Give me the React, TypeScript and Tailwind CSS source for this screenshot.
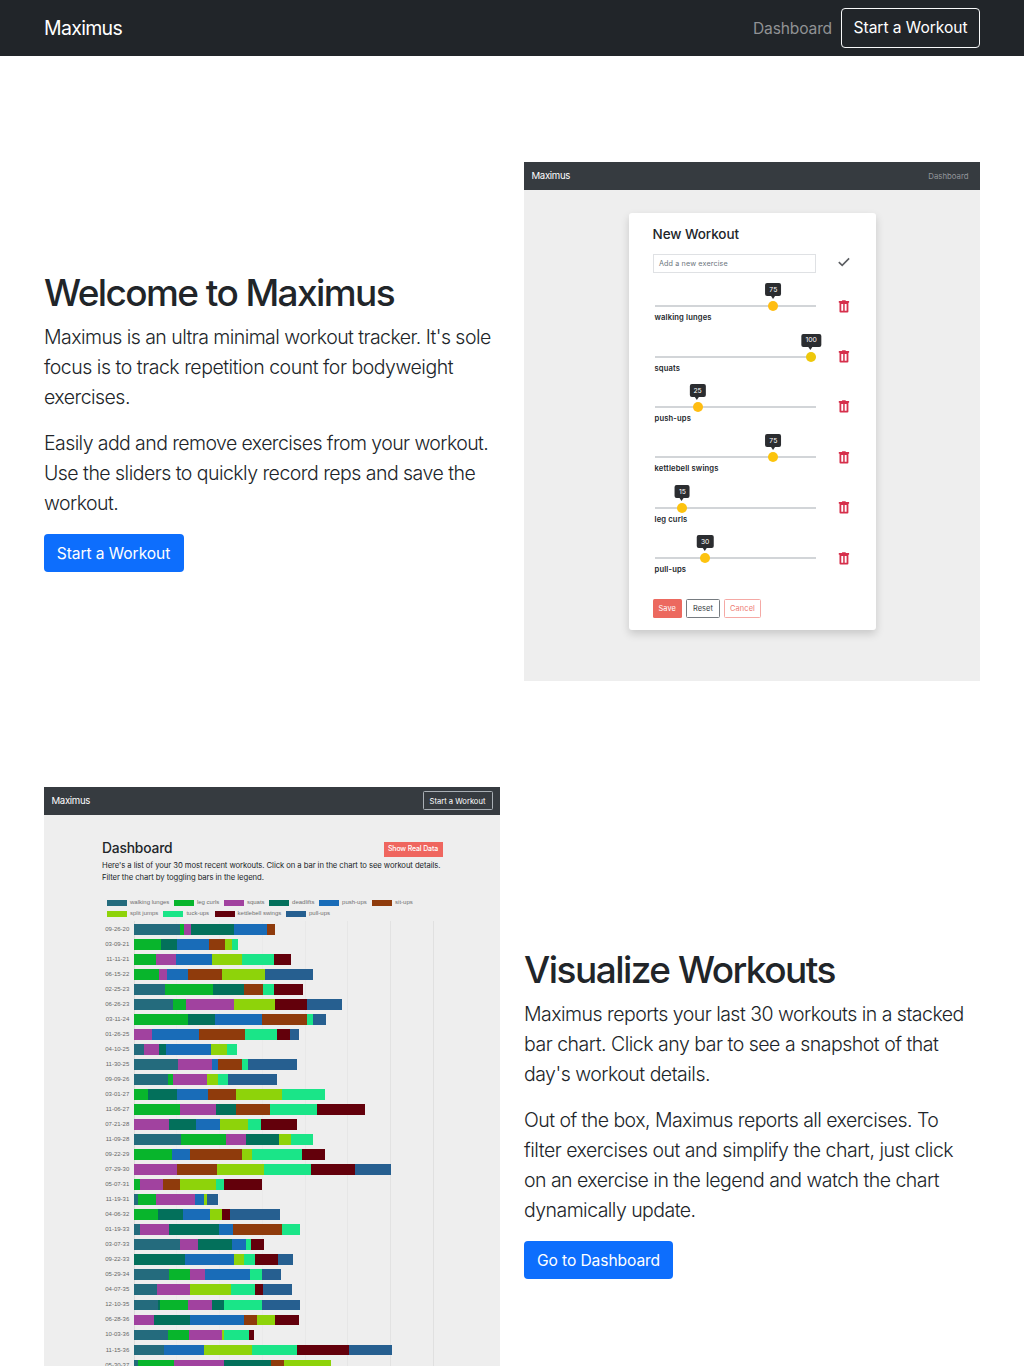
import { ReactNode } from "react";

const colors: Record<string, string> = {
  w: "#246b7d",
  l: "#08b52c",
  s: "#a1429f",
  d: "#03705b",
  p: "#196cb8",
  i: "#8f3b0c",
  j: "#8ed30a",
  t: "#1ae588",
  k: "#63000b",
  u: "#265f90",
};

// Each segment is an exercise key followed by its cumulative end value, at three units per pixel.
const workouts: [string, string][] = [
  ["09-26-20", "w137 l150 s169 d299 p398 i421"],
  ["03-09-21", "l81 d129 p225 i272 j292 t311"],
  ["11-11-21", "l64 s124 p232 j322 t419 k471"],
  ["06-15-22", "l74 s99 p161 i264 j391 u535"],
  ["02-25-23", "w93 l237 d329 i387 t420 k507"],
  ["06-26-23", "w115 l155 s299 j423 k519 u624"],
  ["03-11-24", "l162 d243 p384 i519 t536 u574"],
  ["01-26-25", "s52 p193 i331 t428 k467 u494"],
  ["04-10-25", "w28 s74 d94 p229 j279 t308"],
  ["11-30-25", "w131 s233 p251 i323 t341 u488"],
  ["09-09-26", "w101 l117 s217 j251 t281 u427"],
  ["03-01-27", "l40 d127 p220 i304 j442 t573"],
  ["11-06-27", "l138 s245 d304 i408 t548 k692"],
  ["07-21-28", "s103 d184 p257 j341 t379 k487"],
  ["11-09-28", "w140 l275 s335 d434 j469 t536"],
  ["09-22-29", "l113 p167 i323 j353 t503 k573"],
  ["07-29-30", "s128 i248 j388 t530 k663 u769"],
  ["05-07-31", "l16 s85 i136 j244 t270 k383"],
  ["11-19-31", "w12 l65 s182 p210 j219 u250"],
  ["04-06-32", "l72 d146 p228 j263 k286 u437"],
  ["01-19-33", "w16 s103 d254 p295 i442 t496"],
  ["03-07-33", "w137 s192 d294 p335 t349 k390"],
  ["09-22-33", "d151 p299 j329 t361 k431 u476"],
  ["05-29-34", "w104 l168 s212 p347 t383 u441"],
  ["04-07-35", "w68 s167 j289 t363 k387 u472"],
  ["12-10-35", "w70 d76 l160 s234 d269 t383 u497"],
  ["06-28-36", "s59 d168 p328 i368 j421 k493"],
  ["10-03-36", "w100 l165 s263 j268 t345 k359"],
  ["11-15-36", "w89 p210 j353 t488 k644 u772"],
  ["05-30-37", "w10 l119 s270 d409 i450 j590"],
];

const legend: [string, string, string][][] = [
  [
    ["w", "walking lunges", "w-[66.9px]"],
    ["l", "leg curls", "w-[50px]"],
    ["s", "squats", "w-[45.2px]"],
    ["d", "deadlifts", "w-[50px]"],
    ["p", "push-ups", "w-[53px]"],
    ["i", "sit-ups", "w-[50px]"],
  ],
  [
    ["j", "split jumps", "w-[56.4px]"],
    ["t", "tuck-ups", "w-[51.2px]"],
    ["k", "kettlebell swings", "w-[71.4px]"],
    ["u", "pull-ups", "w-[50px]"],
  ],
];

const exercises = [
  { name: "walking lunges", reps: 75, thumb: "#ffbd12" },
  { name: "squats", reps: 100, thumb: "#eec80b" },
  { name: "push-ups", reps: 25, thumb: "#ffbd12" },
  { name: "kettlebell swings", reps: 75, thumb: "#fcc40c" },
  { name: "leg curls", reps: 15, thumb: "#fdc30f" },
  { name: "pull-ups", reps: 30, thumb: "#fdc30f" },
];

function segments(data: string) {
  let previous = 0;
  return data.split(" ").map((part) => {
    const end = Number(part.slice(1));
    const width = (end - previous) / 3;
    previous = end;
    return { color: colors[part[0]], width };
  });
}

function Trash() {
  return (
    <svg className="block h-[13px] w-[12px]" viewBox="0 0 12 13">
      <path
        fill="#d62f4b"
        fillRule="evenodd"
        d="M4.100.2h3.600v.9h3.400v1.700h-.7v8.800q0 1-1 1H2.500q-1 0-1-1V2.800H.8V1.100h3.300zM3.300 3.900v6.900h1.900V3.900zM6.700 3.900v6.900h1.900V3.900z"
      />
    </svg>
  );
}

function MiniNav({ children }: { children: ReactNode }) {
  return (
    <div className="flex h-[27.500px] items-center justify-between bg-[#363b40] pl-[7.500px] text-white">
      <span className="pt-px text-[9.600px] tracking-[-0.034em]">Maximus</span>
      {children}
    </div>
  );
}

function WorkoutPreview() {
  return (
    <div className="h-[519px] w-[456px] bg-[#eee]">
      <MiniNav>
        <span className="mr-[11.500px] pt-[2px] text-[7.800px] text-[#92959a]">Dashboard</span>
      </MiniNav>
      <div className="ml-[105px] mt-[23.500px] h-[416.500px] w-[247px] rounded-[3px] bg-white pl-[23.500px] shadow-[0_4px_8px_rgba(0,0,0,0.16)]">
        <h2 className="pt-[12px] text-[13.500px] leading-[19px] font-medium tracking-[-0.005em] text-[#212529]">
          New Workout
        </h2>
        <div className="mt-[10px] flex items-center">
          <div className="flex h-[19px] w-[163.500px] items-center border border-[#dfe1e4] pt-[2px] pl-[5.500px] text-[7.200px] tracking-[0.018em] text-[#6c757d]">
            Add a new exercise
          </div>
          <svg className="-mt-[3px] ml-[22px] h-[10px] w-[12px]" viewBox="0 0 12 10">
            <path d="M.8 5.100 4.200 8.400 11.100 1.400" fill="none" stroke="#5b5d61" strokeWidth="1.600" />
          </svg>
        </div>
        <div className="pt-[10.700px]">
          {exercises.map(({ name, reps, thumb }) => (
            <div key={name} className="flex h-[50.380px]">
              <div className="w-[163px] pl-[2px]">
                <div className="relative mt-[21.500px] h-[2px] bg-[#d2d5d8]">
                  <div
                    className="absolute top-[-4px] h-[10px] w-[10px] -translate-x-1/2 rounded-full"
                    style={{ left: 5.2 + reps * 1.515, background: thumb }}
                  />
                  <div
                    className="absolute top-[-22px] flex h-[13px] -translate-x-1/2 items-center rounded-[2px] bg-[#2b2d30] px-[4px] pt-px text-[6.800px] text-white"
                    style={{ left: 5.2 + reps * 1.515 }}
                  >
                    {reps}
                    <i className="absolute top-full left-1/2 -ml-[2.500px] border-x-[2.500px] border-t-[3px] border-x-transparent border-t-[#2b2d30]" />
                  </div>
                </div>
                <div className="mt-[6px] text-[7.600px] leading-[10px] font-semibold tracking-[0.020em] whitespace-nowrap text-[#212529]">
                  {name}
                </div>
              </div>
              <div className="mt-[16px] ml-[22.500px]">
                <Trash />
              </div>
            </div>
          ))}
        </div>
        <div className="mt-[13px] flex gap-[4px] text-[7.400px] tracking-[0.015em]">
          <span className="flex h-[19px] w-[29.500px] items-center justify-center rounded-[1.500px] bg-[#ec695f] pt-px text-white">
            Save
          </span>
          <span className="flex h-[19px] w-[34px] items-center justify-center rounded-[1.500px] border border-[#767b80] pt-px text-[#343a40]">
            Reset
          </span>
          <span className="flex h-[19px] w-[37px] items-center justify-center rounded-[1.500px] border border-[#f5a9a5] pt-px text-[#ee7a72]">
            Cancel
          </span>
        </div>
      </div>
    </div>
  );
}

function DashboardPreview() {
  return (
    <div className="h-[653px] w-[456px] bg-[#eee]">
      <MiniNav>
        <span className="mr-[7.500px] flex h-[19px] w-[70px] items-center justify-center rounded-[1.500px] border border-[#a9afb5] pt-px text-[7.600px]">
          Start a Workout
        </span>
      </MiniNav>
      <div className="ml-[58px] w-[340.500px] text-[#212529]">
        <div className="flex items-center justify-between pt-[24px]">
          <h2 className="text-[13.800px] leading-[18px] font-medium tracking-[-0.012em]">Dashboard</h2>
          <span className="mt-[3px] flex h-[15px] w-[59px] items-center justify-center bg-[#ef665f] pt-px text-[7px] font-medium tracking-[-0.022em] text-white">
            Show Real Data
          </span>
        </div>
        <p className="mt-[3.500px] text-[7.700px] leading-[11.900px] tracking-[-0.009em] whitespace-nowrap">
          Here's a list of your 30 most recent workouts. Click on a bar in the chart to see workout details.
          <br />
          Filter the chart by toggling bars in the legend.
        </p>
      </div>
      <div className="mt-[13.500px] ml-[63px] font-['Liberation_Sans',sans-serif] text-[6px] leading-[10.900px] text-[#707070]">
        {legend.map((row, index) => (
          <div key={index} className="flex">
            {row.map(([key, name, width]) => (
              <div key={key} className={`flex shrink-0 items-center gap-[3px] whitespace-nowrap ${width}`}>
                <i className="h-[6px] w-[20px]" style={{ background: colors[key] }} />
                {name}
              </div>
            ))}
          </div>
        ))}
      </div>
      <div className="relative mt-[2px] ml-[52px] pt-[0.500px]">
        <div className="absolute inset-y-0 left-[37.500px] flex gap-[41.800px]">
          <i className="w-px bg-[#dcdcdc]" />
          <i className="w-px bg-[#ebebeb]" />
          <i className="w-px bg-[#ebebeb]" />
          <i className="w-px bg-[#eaeaea]" />
          <i className="w-px bg-[#e8e8e8]" />
          <i className="w-px bg-[#e6e6e6]" />
          <i className="w-px bg-[#e2e2e2]" />
          <i className="w-px bg-[#e0e0e0]" />
        </div>
        {workouts.map(([date, data]) => (
          <div key={date} className="relative flex h-[15.035px] items-center">
            <span className="w-[38.300px] pr-[5px] text-right font-['Liberation_Sans',sans-serif] text-[6px] text-[#666]">
              {date}
            </span>
            <div className="flex h-[10.800px]">
              {segments(data).map(({ color, width }, index) => (
                <i key={index} style={{ width, background: color }} />
              ))}
            </div>
          </div>
        ))}
      </div>
    </div>
  );
}

const heading = "text-[37px] leading-[43px] font-medium";
const lead = "text-[19.500px] leading-[30px] font-light whitespace-nowrap";
const button =
  "mt-4 flex h-[38px] items-center justify-center rounded-[4px] bg-[#0d6efd] pt-px text-[15.600px] text-white";

export default function App() {
  return (
    <div className="h-[1366px] w-[1024px] overflow-hidden bg-white font-['Inter',sans-serif] text-[#212529]">
      <header className="flex h-14 items-center bg-[#212529] px-11 text-white">
        <a className="pt-px text-[19.500px] tracking-[-0.035em]">Maximus</a>
        <a className="ml-auto pt-[2px] text-[15.600px] tracking-[-0.010em] text-[#909294]">Dashboard</a>
        <a className="ml-[9px] flex h-10 w-[139px] items-center justify-center rounded-[4px] border border-[#f8f9fa] pb-px text-[15.600px] tracking-[-0.003em]">
          Start a Workout
        </a>
      </header>

      <section className="mt-[106px] flex h-[519px] items-center px-11">
        <div className="w-[480px]">
          <h1 className={`${heading} tracking-[-0.043em]`}>Welcome to Maximus</h1>
          <p className={`${lead} mt-2`}>
            <span className="block tracking-[-0.0285em]">Maximus is an ultra minimal workout tracker. It's sole</span>
            <span className="block tracking-[-0.0245em]">focus is to track repetition count for bodyweight</span>
            <span className="block tracking-[-0.027em]">exercises.</span>
          </p>
          <p className={`${lead} mt-4`}>
            <span className="block tracking-[-0.030em]">Easily add and remove exercises from your workout.</span>
            <span className="block tracking-[-0.027em]">Use the sliders to quickly record reps and save the</span>
            <span className="block tracking-[-0.028em]">workout.</span>
          </p>
          <a className={`${button} w-[140px] pr-px tracking-[-0.005em]`}>Start a Workout</a>
        </div>
        <WorkoutPreview />
      </section>

      <section className="mt-[106px] flex h-[653px] items-center px-11">
        <DashboardPreview />
        <div className="ml-6 w-[456px] shrink-0">
          <h1 className={`${heading} tracking-[-0.041em]`}>Visualize Workouts</h1>
          <p className={`${lead} mt-2`}>
            <span className="block tracking-[-0.0265em]">Maximus reports your last 30 workouts in a stacked</span>
            <span className="block tracking-[-0.025em]">bar chart. Click any bar to see a snapshot of that</span>
            <span className="block tracking-[-0.026em]">day's workout details.</span>
          </p>
          <p className={`${lead} mt-4`}>
            <span className="block tracking-[-0.028em]">Out of the box, Maximus reports all exercises. To</span>
            <span className="block tracking-[-0.025em]">filter exercises out and simplify the chart, just click</span>
            <span className="block tracking-[-0.027em]">on an exercise in the legend and watch the chart</span>
            <span className="block tracking-[-0.028em]">dynamically update.</span>
          </p>
          <a className={`${button} w-[149px] tracking-[-0.006em]`}>Go to Dashboard</a>
        </div>
      </section>
    </div>
  );
}
